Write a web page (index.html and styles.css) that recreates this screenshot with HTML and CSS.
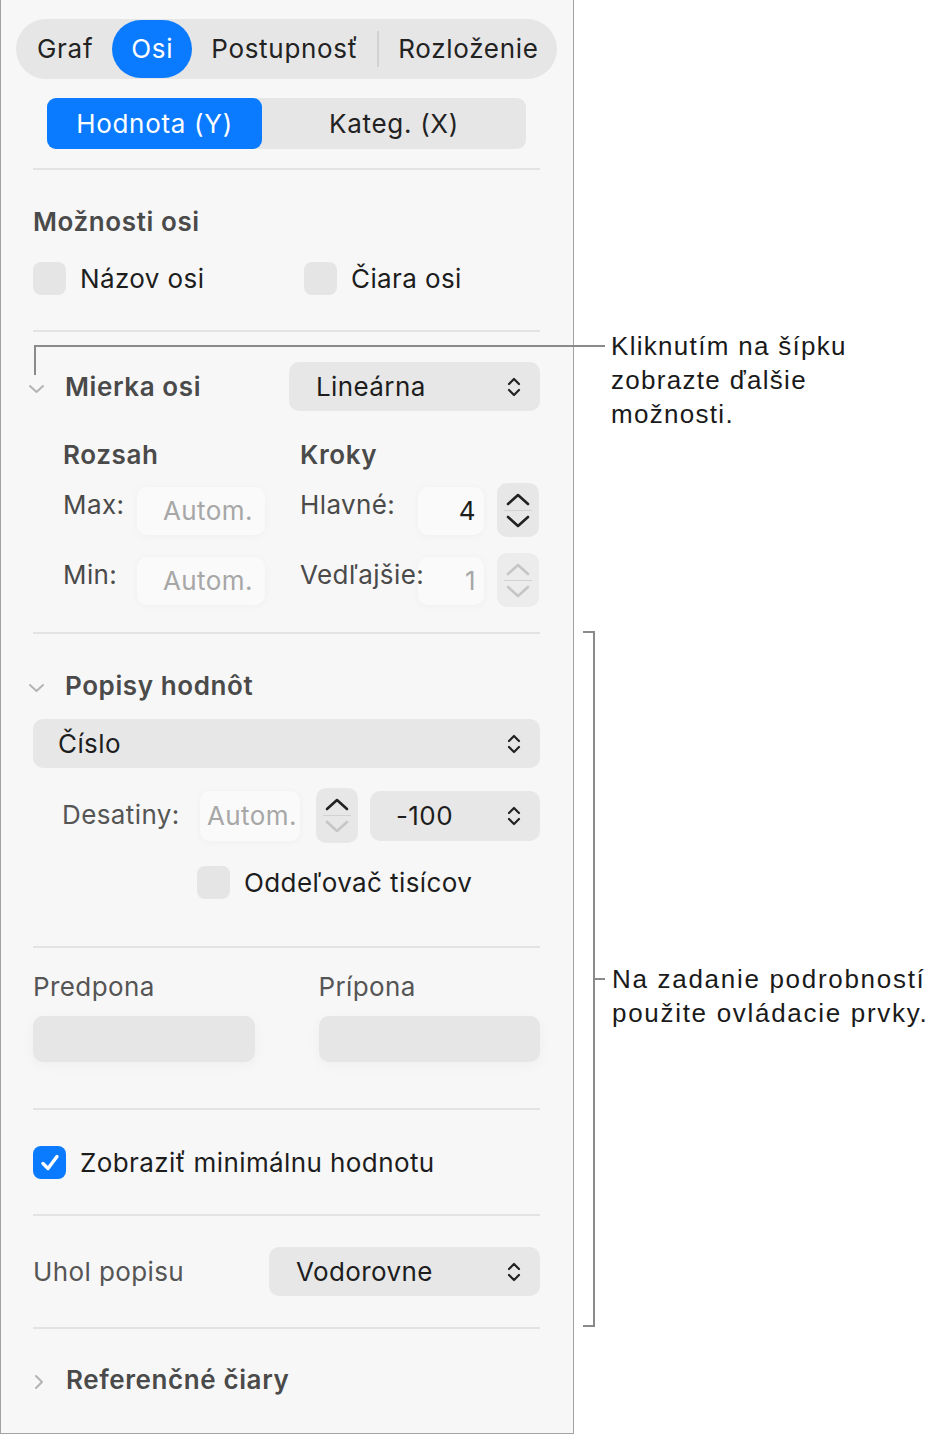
FILE: index.html
```html
<!DOCTYPE html>
<html lang="sk">
<head>
  <meta charset="UTF-8">
  <title>Osi – inšpektor grafu</title>
  <meta name="viewport" content="width=device-width, initial-scale=1">
  <link rel="stylesheet" href="styles.css">
</head>
<body>
  <div class="page">
    <aside class="panel">
      <div class="tabs">
        <span class="tab">Graf</span>
        <span class="tab active">Osi</span>
        <span class="tab">Postupnosť</span>
        <span class="tab-div"></span>
        <span class="tab">Rozloženie</span>
      </div>

      <div class="seg">
        <span class="seg-item on">Hodnota (Y)</span>
        <span class="seg-item">Kateg. (X)</span>
      </div>

      <div class="sep"></div>

      <section class="sec sec-options">
        <h3 class="title">Možnosti osi</h3>
        <div class="check-row">
          <label class="check"><span class="box"></span>Názov osi</label>
          <label class="check"><span class="box"></span>Čiara osi</label>
        </div>
      </section>

      <div class="sep"></div>

      <section class="sec sec-scale">
        <div class="head-row">
          <svg class="disc" width="17" height="10" viewBox="0 0 17 10"><path d="M2 2 L8.5 8 L15 2" fill="none" stroke="#b4b4b4" stroke-width="2" stroke-linecap="round" stroke-linejoin="round"/></svg>
          <h3 class="title">Mierka osi</h3>
          <div class="popup popup-scale">Lineárna
            <svg class="updown" width="16" height="26" viewBox="0 0 16 26"><path d="M3 10 L8 5 L13 10 M3 16 L8 21 L13 16" fill="none" stroke="#222" stroke-width="2.2" stroke-linecap="round" stroke-linejoin="round"/></svg>
          </div>
        </div>
        <div class="range-grid">
          <h4 class="sub">Rozsah</h4>
          <h4 class="sub sub-steps">Kroky</h4>

          <span class="lbl col-l1">Max:</span>
          <span class="field ph col-f1">Autom.</span>
          <span class="lbl col-l2">Hlavné:</span>
          <span class="field num col-f2">4</span>
          <div class="stepper col-st">
            <svg width="26" height="14" viewBox="0 0 26 14"><path d="M3 12 L13 3 L23 12" fill="none" stroke="#222" stroke-width="2.6" stroke-linecap="round" stroke-linejoin="round"/></svg>
            <span class="st-line"></span>
            <svg width="26" height="14" viewBox="0 0 26 14"><path d="M3 2 L13 11 L23 2" fill="none" stroke="#222" stroke-width="2.6" stroke-linecap="round" stroke-linejoin="round"/></svg>
          </div>

          <span class="lbl col-l1">Min:</span>
          <span class="field ph col-f1">Autom.</span>
          <span class="lbl col-l2">Vedľajšie:</span>
          <span class="field num dim col-f2">1</span>
          <div class="stepper off col-st">
            <svg width="26" height="14" viewBox="0 0 26 14"><path d="M3 12 L13 3 L23 12" fill="none" stroke="#c6c6c6" stroke-width="2.6" stroke-linecap="round" stroke-linejoin="round"/></svg>
            <span class="st-line"></span>
            <svg width="26" height="14" viewBox="0 0 26 14"><path d="M3 2 L13 11 L23 2" fill="none" stroke="#c6c6c6" stroke-width="2.6" stroke-linecap="round" stroke-linejoin="round"/></svg>
          </div>
        </div>
      </section>

      <div class="sep"></div>

      <section class="sec sec-labels">
        <div class="head-row">
          <svg class="disc" width="17" height="10" viewBox="0 0 17 10"><path d="M2 2 L8.5 8 L15 2" fill="none" stroke="#b4b4b4" stroke-width="2" stroke-linecap="round" stroke-linejoin="round"/></svg>
          <h3 class="title">Popisy hodnôt</h3>
        </div>
        <div class="popup popup-wide">Číslo
          <svg class="updown" width="16" height="26" viewBox="0 0 16 26"><path d="M3 10 L8 5 L13 10 M3 16 L8 21 L13 16" fill="none" stroke="#222" stroke-width="2.2" stroke-linecap="round" stroke-linejoin="round"/></svg>
        </div>
        <div class="dec-row">
          <span class="lbl-soft">Desatiny:</span>
          <span class="field ph dec-field">Autom.</span>
          <div class="stepper dec-stepper">
            <svg width="26" height="14" viewBox="0 0 26 14"><path d="M3 12 L13 3 L23 12" fill="none" stroke="#222" stroke-width="2.6" stroke-linecap="round" stroke-linejoin="round"/></svg>
            <span class="st-line"></span>
            <svg width="26" height="14" viewBox="0 0 26 14"><path d="M3 2 L13 11 L23 2" fill="none" stroke="#c6c6c6" stroke-width="2.6" stroke-linecap="round" stroke-linejoin="round"/></svg>
          </div>
          <div class="popup popup-neg">-100
            <svg class="updown" width="16" height="26" viewBox="0 0 16 26"><path d="M3 10 L8 5 L13 10 M3 16 L8 21 L13 16" fill="none" stroke="#222" stroke-width="2.2" stroke-linecap="round" stroke-linejoin="round"/></svg>
          </div>
        </div>
        <label class="check thousands"><span class="box"></span>Oddeľovač tisícov</label>
      </section>

      <div class="sep"></div>

      <section class="sec sec-affix">
        <div class="affix">
          <span class="lbl-soft">Predpona</span>
          <span class="affix-field"></span>
        </div>
        <div class="affix">
          <span class="lbl-soft">Prípona</span>
          <span class="affix-field"></span>
        </div>
      </section>

      <div class="sep"></div>

      <section class="sec sec-min">
        <label class="check"><span class="box on">
          <svg width="22" height="20" viewBox="0 0 22 20"><path d="M4 10.5 L9 15.5 L18 3.5" fill="none" stroke="#fff" stroke-width="3.4" stroke-linecap="round" stroke-linejoin="round"/></svg>
        </span>Zobraziť minimálnu hodnotu</label>
      </section>

      <div class="sep"></div>

      <section class="sec sec-angle">
        <span class="lbl-soft">Uhol popisu</span>
        <div class="popup popup-angle">Vodorovne
          <svg class="updown" width="16" height="26" viewBox="0 0 16 26"><path d="M3 10 L8 5 L13 10 M3 16 L8 21 L13 16" fill="none" stroke="#222" stroke-width="2.2" stroke-linecap="round" stroke-linejoin="round"/></svg>
        </div>
      </section>

      <div class="sep"></div>

      <section class="sec sec-ref">
        <div class="head-row">
          <svg class="disc disc-right" width="12" height="18" viewBox="0 0 12 18"><path d="M3 3 L9 9 L3 15" fill="none" stroke="#b4b4b4" stroke-width="2" stroke-linecap="round" stroke-linejoin="round"/></svg>
          <h3 class="title">Referenčné čiary</h3>
        </div>
      </section>
    </aside>

    <!-- popisky -->
    <div class="leader-top"></div>
    <p class="note note-top">Kliknutím na šípku<br>zobrazte ďalšie<br>možnosti.</p>

    <div class="bracket"></div>
    <div class="bracket-tick"></div>
    <p class="note note-mid">Na zadanie podrobností<br>použite ovládacie prvky.</p>
  </div>
</body>
</html>
```

FILE: styles.css
```css
body {
  margin: 0;
  background: #fff;
  font-family: Inter, "Noto Sans", sans-serif;
  color: #1d1d1d;
}
.page {
  position: relative;
  width: 939px;
  height: 1436px;
}
.panel {
  width: 574px;
  height: 1434px;
  box-sizing: border-box;
  border: 1px solid #a2a2a2;
  border-top: none;
  background: #f7f7f7;
  padding-top: 19px;
  font-size: 26px;
  letter-spacing: 0.4px;
}

/* horné záložky */
.tabs {
  display: flex;
  align-items: center;
  height: 60px;
  margin: 0 16px 0 15px;
  padding-left: 2px;
  background: #e6e6e6;
  border-radius: 30px;
}
.tab {
  padding: 0 19px;
  line-height: 58px;
  color: #222;
  letter-spacing: 0.7px;
  white-space: nowrap;
}
.tab.active {
  background: #0a7aff;
  color: #fff;
  border-radius: 29px;
}
.tab-div {
  flex: none;
  width: 2px;
  height: 36px;
  background: #d2d2d2;
}

.seg {
  display: flex;
  margin: 19px 47px 0 46px;
  height: 51px;
  background: #e6e6e6;
  border-radius: 9px;
}
.seg-item {
  flex: 1;
  display: flex;
  align-items: center;
  justify-content: center;
  color: #222;
  letter-spacing: 0.7px;
}
.seg-item.on {
  flex: 0 0 215px;
  background: #0a7aff;
  color: #fff;
  border-radius: 9px;
}

.sep {
  height: 2px;
  margin: 19px 33px 0 32px;
  background: #e3e3e3;
}
.sec + .sep { margin-top: 0; }

.sec {
  padding: 0 33px 0 32px;
}
.title {
  margin: 0;
  font-size: 26px;
  font-weight: 600;
  line-height: 32px;
  color: #4a4a4a;
  letter-spacing: 0.6px;
}

/* zaškrtávacie polia */
.check {
  display: flex;
  align-items: center;
  gap: 14px;
  line-height: 33px;
  color: #1d1d1d;
}
.box {
  width: 33px;
  height: 33px;
  border-radius: 8px;
  background: #e5e5e5;
  display: flex;
  align-items: center;
  justify-content: center;
  flex: none;
}
.box.on { background: #0a7aff; }

.sec-options { padding-top: 36px; padding-bottom: 35px; }
.check-row {
  display: flex;
  margin-top: 24px;
}
.check-row .check:first-child {
  flex: none;
  width: 271px;
}

/* mierka osi */
.head-row {
  display: flex;
  align-items: center;
}
.disc {
  margin: 4px 20px 0 -5px;
  flex: none;
}
.disc-right { margin: 4px 21px 0 0; }
.popup {
  display: flex;
  align-items: center;
  justify-content: space-between;
  box-sizing: border-box;
  height: 49px;
  padding: 0 18px 0 27px;
  background: #e7e7e7;
  border-radius: 10px;
  color: #1d1d1d;
}
.popup-scale {
  margin-left: auto;
  width: 251px;
}
.sec-scale { padding-top: 30px; padding-bottom: 25px; }

.range-grid {
  display: grid;
  grid-template-columns: 74px 128px 35px 118px 66px 13px 42px;
  grid-template-rows: 44px 70px 54px;
  margin: 28px 0 0 30px;
  align-items: start;
}
.sub {
  margin: 0;
  grid-column: 1 / 4;
  font-size: 26px;
  font-weight: 600;
  line-height: 32px;
  color: #4a4a4a;
  letter-spacing: 0.6px;
}
.sub-steps { grid-column: 4 / 8; }
.col-l1 { grid-column: 1; }
.col-f1 { grid-column: 2; }
.col-l2 { grid-column: 4; }
.col-f2 { grid-column: 5; }
.col-st { grid-column: 7; }
.lbl {
  position: relative;
  z-index: 1;
  padding-top: 6px;
  line-height: 32px;
  color: #4a4a4a;
  white-space: nowrap;
}
.field {
  box-sizing: border-box;
  height: 48px;
  margin-top: 4px;
  line-height: 48px;
  border-radius: 10px;
  background: #fafafa;
  box-shadow: 0 1px 8px rgba(0, 0, 0, 0.035);
}
.ph {
  padding-left: 26px;
  color: #a7a7a7;
}
.num {
  text-align: right;
  padding-right: 8px;
  color: #1d1d1d;
}
.num.dim { color: #a7a7a7; }
.stepper {
  display: flex;
  flex-direction: column;
  align-items: center;
  justify-content: center;
  gap: 4px;
  height: 54px;
  background: #e7e7e7;
  border-radius: 10px;
}
.stepper.off { background: #ececec; }
.st-line {
  width: 28px;
  height: 1px;
  background: #d2d2d2;
}

/* popisy hodnôt */
.sec-labels { padding-top: 36px; padding-bottom: 47px; }
.popup-wide {
  margin-top: 17px;
  padding-left: 25px;
}
.dec-row {
  display: flex;
  align-items: center;
  margin: 20px 0 0 29px;
  height: 55px;
}
.lbl-soft {
  color: #555;
  line-height: 32px;
}
.dec-row .lbl-soft { width: 138px; margin-top: -1px; }
.dec-field {
  width: 100px;
  height: 50px;
  margin: 0 16px 0 0;
  padding-left: 7px;
  line-height: 50px;
}
.dec-stepper {
  width: 42px;
  height: 55px;
  flex: none;
}
.popup-neg {
  margin-left: 12px;
  flex: 1;
  height: 50px;
  padding-left: 26px;
}
.thousands {
  margin: 23px 0 0 164px;
}

/* predpona a prípona */
.sec-affix {
  display: flex;
  gap: 64px;
  padding-top: 23px;
  padding-bottom: 46px;
}
.affix {
  flex: 1;
  display: flex;
  flex-direction: column;
  gap: 13px;
}
.affix-field {
  height: 46px;
  background: #e6e6e6;
  border-radius: 10px;
  box-shadow: 0 3px 14px rgba(0, 0, 0, 0.04);
}

.sec-min { padding-top: 36px; padding-bottom: 35px; }

.sec-angle {
  display: flex;
  align-items: center;
  justify-content: space-between;
  padding-top: 31px;
  padding-bottom: 31px;
}
.popup-angle { width: 271px; }

.sec-ref { padding-top: 35px; }

/* popisky vpravo */
.note {
  position: absolute;
  margin: 0;
  font-family: "Liberation Sans", Arial, sans-serif;
  font-size: 26px;
  line-height: 34px;
  letter-spacing: 1.3px;
  color: #1a1a1a;
}
.note-top { left: 611px; top: 329px; }
.note-mid { left: 612px; top: 962px; letter-spacing: 1.7px; }
.leader-top {
  position: absolute;
  left: 34px;
  top: 345px;
  width: 571px;
  height: 30px;
  border-top: 2px solid #8a8a8a;
  border-left: 2px solid #8a8a8a;
  box-sizing: border-box;
}
.bracket {
  position: absolute;
  left: 583px;
  top: 631px;
  width: 12px;
  height: 696px;
  box-sizing: border-box;
  border: 2px solid #8a8a8a;
  border-left: none;
}
.bracket-tick {
  position: absolute;
  left: 595px;
  top: 978px;
  width: 10px;
  height: 2px;
  background: #8a8a8a;
}
```
